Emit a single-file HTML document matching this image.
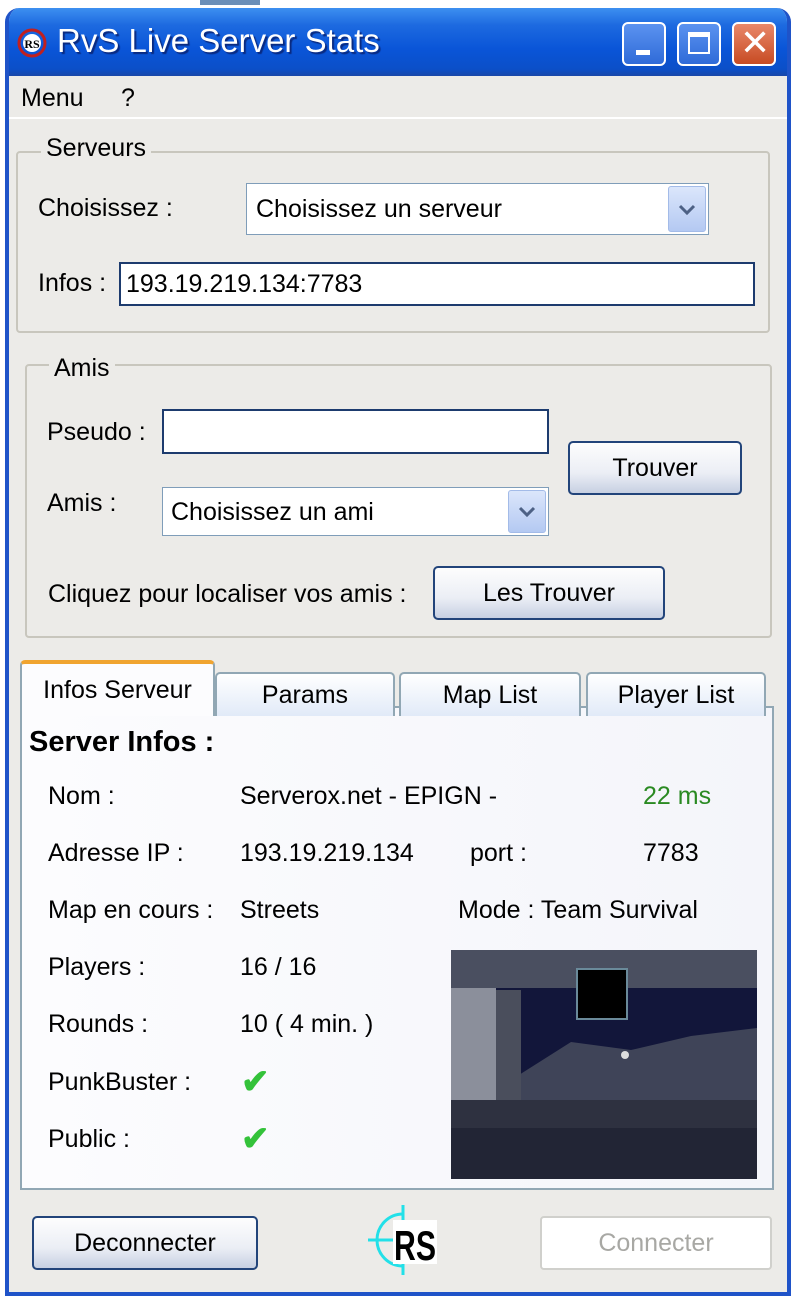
<!DOCTYPE html>
<html><head><meta charset="utf-8"><style>
*{margin:0;padding:0;box-sizing:border-box}
body{width:800px;height:1302px;background:#fff;position:relative;overflow:hidden;font-family:"Liberation Sans",sans-serif;font-size:25px;color:#000}
.a{position:absolute;white-space:nowrap}
.win{position:absolute;left:5px;top:8px;width:786px;height:1288px;border:4px solid #1f53c8;border-top:0;border-radius:14px 14px 0 0;background:#ecebe8;overflow:hidden}
.in{position:absolute;left:-4px;top:0;width:786px;height:1288px}
.title{position:absolute;left:0;top:0;width:100%;height:68px;background:linear-gradient(#3d8ff0 0%,#1d6ae0 25%,#0a55d8 60%,#0b4fc8 90%,#1a47a8 100%);border-radius:14px 14px 0 0}
.tb{position:absolute;top:14px;width:44px;height:44px;border:2px solid #fff;border-radius:6px;background:linear-gradient(#5b93f0,#2f6bd8)}
.grp{position:absolute;border:2px solid #c8c6bd;border-radius:4px}
.gl{position:absolute;background:#ecebe8;padding:0 5px}
.box{position:absolute;background:#fff;border:2px solid #1d3b6e}
.cb{position:absolute;background:#fff;border:1px solid #7f9db9}
.dd{position:absolute;top:2px;right:2px;bottom:2px;width:38px;background:linear-gradient(#dbe6fb,#b4c9f2);border:1px solid #a3bbe8;border-radius:3px}
.btn{position:absolute;border:2px solid #22447a;border-radius:5px;background:linear-gradient(#fdfdfd,#ebeef5 60%,#c7d0e2);text-align:center}
.tab{position:absolute;top:664px;height:44px;border:2px solid #91a7b4;border-bottom:0;border-radius:5px 5px 0 0;background:linear-gradient(#fff,#e1eaf8);text-align:center;line-height:42px}
.chk{color:#34c23a;font-size:34px;font-weight:bold}
</style></head><body>
<div style="position:absolute;left:200px;top:0;width:60px;height:5px;background:#6b8fb8"></div>
<div class="win"><div class="in">
 <div class="title">
  <svg class="a" style="left:10px;top:18px" width="34" height="34" viewBox="0 0 34 34"><circle cx="17" cy="17" r="13" fill="none" stroke="#c02020" stroke-width="3"/><circle cx="17" cy="17" r="9" fill="#fff"/><text x="17" y="22" font-size="12" font-weight="bold" text-anchor="middle" font-family="Liberation Serif">RS</text></svg>
  <div class="a" style="left:52px;top:14px;color:#fff;font-size:33px;text-shadow:2px 2px 1px #0a2a80">RvS Live Server Stats</div>
  <div class="tb" style="left:617px"><div class="a" style="left:12px;top:26px;width:14px;height:5px;background:#fff"></div></div>
  <div class="tb" style="left:672px"><div class="a" style="left:9px;top:8px;width:22px;height:22px;border:2px solid #fff;border-top-width:5px"></div></div>
  <div class="tb" style="left:727px;background:linear-gradient(#e9886a,#c74b23)"><div class="a" style="left:6px;top:-2px;color:#fff;font-size:36px">✕</div></div>
 </div>
 <div class="a" style="left:16px;top:76px">Menu</div>
 <div class="a" style="left:116px;top:76px">?</div>
 <div class="a" style="left:0;top:109px;width:100%;height:2px;background:#fff"></div>

 <div class="grp" style="left:11px;top:143px;width:754px;height:182px"></div>
 <div class="gl" style="left:36px;top:126px">Serveurs</div>
 <div class="a" style="left:33px;top:186px">Choisissez :</div>
 <div class="cb" style="left:241px;top:175px;width:463px;height:52px"><div class="a" style="left:9px;top:11px">Choisissez un serveur</div><div class="dd"><svg width="36" height="44" viewBox="0 0 36 44"><path d="M11 19l7 7 7-7" fill="none" stroke="#4d6185" stroke-width="3"/></svg></div></div>
 <div class="a" style="left:33px;top:261px">Infos :</div>
 <div class="box" style="left:114px;top:254px;width:636px;height:44px"><div class="a" style="left:5px;top:6px">193.19.219.134:7783</div></div>

 <div class="grp" style="left:20px;top:356px;width:747px;height:274px"></div>
 <div class="gl" style="left:44px;top:346px">Amis</div>
 <div class="a" style="left:42px;top:410px">Pseudo :</div>
 <div class="box" style="left:157px;top:401px;width:387px;height:45px"></div>
 <div class="btn" style="left:563px;top:433px;width:174px;height:54px;line-height:50px">Trouver</div>
 <div class="a" style="left:42px;top:481px">Amis :</div>
 <div class="cb" style="left:157px;top:479px;width:387px;height:49px"><div class="a" style="left:8px;top:10px">Choisissez un ami</div><div class="dd"><svg width="36" height="44" viewBox="0 0 36 44"><path d="M11 17l7 7 7-7" fill="none" stroke="#4d6185" stroke-width="3"/></svg></div></div>
 <div class="a" style="left:43px;top:572px">Cliquez pour localiser vos amis :</div>
 <div class="btn" style="left:428px;top:558px;width:232px;height:54px;line-height:50px">Les Trouver</div>

 <div class="a" style="left:15px;top:698px;width:754px;height:484px;border:2px solid #91a7b4;background:linear-gradient(90deg,#fcfcfe,#f4f5fa)"></div>
 <div class="tab" style="left:15px;top:652px;width:195px;height:56px;background:#fcfcfe;border-color:#91a7b4;border-top:4px solid #f0a430;line-height:52px">Infos Serveur</div>
 <div class="tab" style="left:210px;width:180px">Params</div>
 <div class="tab" style="left:394px;width:182px">Map List</div>
 <div class="tab" style="left:581px;width:180px">Player List</div>

 <div class="a" style="left:24px;top:718px;font-size:29px;font-weight:bold">Server Infos :</div>
 <div class="a" style="left:43px;top:774px">Nom :</div><div class="a" style="left:235px;top:774px">Serverox.net - EPIGN -</div><div class="a" style="left:638px;top:774px;color:#2a8a22">22 ms</div>
 <div class="a" style="left:43px;top:831px">Adresse IP :</div><div class="a" style="left:235px;top:831px">193.19.219.134</div><div class="a" style="left:465px;top:831px">port :</div><div class="a" style="left:638px;top:831px">7783</div>
 <div class="a" style="left:43px;top:888px">Map en cours :</div><div class="a" style="left:235px;top:888px">Streets</div><div class="a" style="left:453px;top:888px">Mode : Team Survival</div>
 <div class="a" style="left:43px;top:945px">Players :</div><div class="a" style="left:235px;top:945px">16 / 16</div>
 <div class="a" style="left:43px;top:1002px">Rounds :</div><div class="a" style="left:235px;top:1002px">10 ( 4 min. )</div>
 <div class="a" style="left:43px;top:1060px">PunkBuster :</div><div class="a chk" style="left:236px;top:1054px">✔</div>
 <div class="a" style="left:43px;top:1117px">Public :</div><div class="a chk" style="left:236px;top:1111px">✔</div>

 <svg class="a" style="left:446px;top:942px" width="306" height="229" viewBox="0 0 306 229">
  <rect width="306" height="229" fill="#1f2133"/>
  <rect x="0" y="0" width="306" height="38" fill="#4a4f60"/>
  <rect x="0" y="38" width="306" height="140" fill="#12163a"/>
  <polygon points="60,130 120,92 180,100 240,86 306,78 306,150 0,150" fill="#3f4458"/>
  <rect x="0" y="38" width="45" height="130" fill="#8b8f9b"/>
  <rect x="45" y="40" width="25" height="120" fill="#4a4e5c"/>
  <rect x="0" y="150" width="306" height="29" fill="#2e3140"/>
  <rect x="0" y="178" width="306" height="51" fill="#222535"/>
  <rect x="126" y="19" width="50" height="50" fill="#000" stroke="#6a8a9a" stroke-width="2"/>
  <circle cx="174" cy="105" r="4" fill="#ddd"/>
 </svg>

 <div class="btn" style="left:27px;top:1208px;width:226px;height:54px;line-height:50px">Deconnecter</div>
 <svg class="a" style="left:358px;top:1192px" width="80" height="80" viewBox="0 0 80 80"><path d="M40 5v70M5 40h25" stroke="#22e0e8" stroke-width="3"/><path d="M40 14a26 26 0 0 0 0 52" fill="none" stroke="#22e0e8" stroke-width="3"/><rect x="30" y="20" width="44" height="44" fill="#fff"/><text x="31" y="60" font-size="42" font-weight="bold" font-family="Liberation Sans" fill="#000" textLength="42" lengthAdjust="spacingAndGlyphs">RS</text></svg>
 <div class="a" style="left:535px;top:1208px;width:232px;height:54px;line-height:50px;text-align:center;border:2px solid #d0d0cc;border-radius:4px;background:#fff;color:#a8a8a4">Connecter</div>
</div></div>
</body></html>
